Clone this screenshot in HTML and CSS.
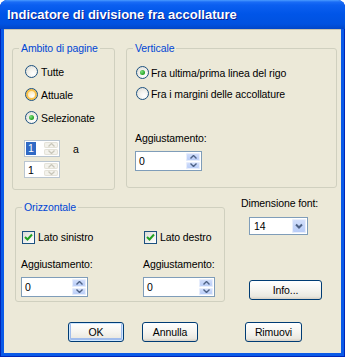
FILE: index.html
```html
<html>
    <head>
        <title>Indicatore di divisione fra accollature</title>
        <link rel="stylesheet" href="styles.css">
    </head>
    <body>
        <div class="window">
            <div class="titlebar">Indicatore di divisione fra accollature</div>
            <div class="client">
                <div class="top">
                    <fieldset class="group range">
                        <legend>Ambito di pagine</legend>
                        <div class="opts">
                            <div class="opt"><span class="rb"></span>Tutte</div>
                            <div class="opt"><span class="rb hot"></span>Attuale</div>
                            <div class="opt"><span class="rb on"></span>Selezionate</div>
                        </div>
                        <div class="pages">
                            <div class="pagerow">
                                <div class="spin off small"><span class="val"><span class="sel">1</span></span><span class="btns"><span class="b"><svg width="7" height="4"><path d="M0.5 3.5 L3.5 0.5 L6.5 3.5" fill="none" stroke="#c9c7ba" stroke-width="1.3"/></svg></span><span class="b"><svg width="7" height="4"><path d="M0.5 0.5 L3.5 3.5 L6.5 0.5" fill="none" stroke="#c9c7ba" stroke-width="1.3"/></svg></span></span></div>
                                <span class="to">a</span>
                            </div>
                            <div class="pagerow">
                                <div class="spin off small"><span class="val">1</span><span class="btns"><span class="b"><svg width="7" height="4"><path d="M0.5 3.5 L3.5 0.5 L6.5 3.5" fill="none" stroke="#c9c7ba" stroke-width="1.3"/></svg></span><span class="b"><svg width="7" height="4"><path d="M0.5 0.5 L3.5 3.5 L6.5 0.5" fill="none" stroke="#c9c7ba" stroke-width="1.3"/></svg></span></span></div>
                            </div>
                        </div>
                    </fieldset>
                    <fieldset class="group vert">
                        <legend>Verticale</legend>
                        <div class="opts">
                            <div class="opt"><span class="rb on"></span>Fra ultima/prima linea del rigo</div>
                            <div class="opt"><span class="rb"></span>Fra i margini delle accollature</div>
                        </div>
                        <div class="adj">Aggiustamento:</div>
                        <div class="spin"><span class="val">0</span><span class="btns"><span class="b"><svg width="7" height="4"><path d="M0.5 3.5 L3.5 0.5 L6.5 3.5" fill="none" stroke="#4d6185" stroke-width="1.4"/></svg></span><span class="b"><svg width="7" height="4"><path d="M0.5 0.5 L3.5 3.5 L6.5 0.5" fill="none" stroke="#4d6185" stroke-width="1.4"/></svg></span></span></div>
                    </fieldset>
                </div>
                <div class="middle">
                    <fieldset class="group horiz">
                        <legend>Orizzontale</legend>
                        <div class="sides">
                            <div class="opt chk"><span class="cb"><svg width="11" height="11"><path d="M2 5 L4.5 7.5 L9 2.5" fill="none" stroke="#21a121" stroke-width="2"/></svg></span>Lato sinistro</div>
                            <div class="opt chk"><span class="cb"><svg width="11" height="11"><path d="M2 5 L4.5 7.5 L9 2.5" fill="none" stroke="#21a121" stroke-width="2"/></svg></span>Lato destro</div>
                            <div class="adj">Aggiustamento:</div>
                            <div class="adj">Aggiustamento:</div>
                            <div class="spin"><span class="val">0</span><span class="btns"><span class="b"><svg width="7" height="4"><path d="M0.5 3.5 L3.5 0.5 L6.5 3.5" fill="none" stroke="#4d6185" stroke-width="1.4"/></svg></span><span class="b"><svg width="7" height="4"><path d="M0.5 0.5 L3.5 3.5 L6.5 0.5" fill="none" stroke="#4d6185" stroke-width="1.4"/></svg></span></span></div>
                            <div class="spin wide"><span class="val">0</span><span class="btns"><span class="b"><svg width="7" height="4"><path d="M0.5 3.5 L3.5 0.5 L6.5 3.5" fill="none" stroke="#4d6185" stroke-width="1.4"/></svg></span><span class="b"><svg width="7" height="4"><path d="M0.5 0.5 L3.5 3.5 L6.5 0.5" fill="none" stroke="#4d6185" stroke-width="1.4"/></svg></span></span></div>
                        </div>
                    </fieldset>
                    <div class="side">
                        <div class="fontlabel">Dimensione font:</div>
                        <div class="combo"><span class="val">14</span><span class="drop"><svg width="8" height="6"><path d="M1 1.5 L4 4.5 L7 1.5" fill="none" stroke="#4d6185" stroke-width="2"/></svg></span></div>
                        <div class="btn info">Info...</div>
                    </div>
                </div>
                <div class="buttons">
                    <div class="btn default">OK</div>
                    <div class="btn">Annulla</div>
                    <div class="btn remove">Rimuovi</div>
                </div>
            </div>
        </div>
    </body>
</html>
```

FILE: styles.css
```css
body {
    margin: 0;
    background: #fff;
    font-family: "Liberation Sans", Arial, sans-serif;
    font-size: 10.5px;
    letter-spacing: -0.1px;
    color: #000;
}
.window {
    width: 345px;
    height: 357px;
    box-sizing: border-box;
    display: flex;
    flex-direction: column;
    padding: 0 4px 4px;
    background: #0a5ae8;
    border-radius: 8px 8px 0 0;
    box-shadow: inset 1px 0 #0026b8, inset -1px 0 #0026b8, inset 0 -1px #0026b8;
}
.titlebar {
    height: 29px;
    margin: 0 -4px;
    padding-left: 7px;
    display: flex;
    align-items: center;
    color: #fff;
    font-size: 13px;
    font-weight: bold;
    letter-spacing: 0;
    text-shadow: 1px 1px #0a1e8c;
    border-radius: 7px 7px 0 0;
    background: linear-gradient(#4a9bff 0, #1a6cf6 2px, #0b5ff0 5px, #0055e8 14px, #0052e0 24px, #0146c8 29px);
}
.client {
    flex: 1;
    background: #ece9d8;
    padding: 13px 0 0 8px;
    box-shadow: inset 0 1px #c8c4b0;
}
.top {
    display: flex;
    gap: 11px;
    align-items: flex-start;
}
.group {
    margin: 0;
    padding: 0;
    border: 1px solid #d0d0bf;
    border-radius: 3px;
    box-sizing: border-box;
    min-width: 0;
}
.group legend {
    margin-left: 6px;
    padding: 0 2px;
    color: #0046d5;
    line-height: 13px;
}
.range {
    width: 103px;
    height: 148px;
}
.vert {
    width: 211px;
    height: 146px;
}
.opts {
    padding: 5px 0 0 12px;
}
.opt {
    display: flex;
    align-items: center;
    gap: 3px;
    height: 23px;
}
.vert .opts {
    padding: 7px 0 0 9px;
}
.vert .opt {
    height: 21px;
    gap: 2px;
}
.rb {
    width: 13px;
    height: 13px;
    box-sizing: border-box;
    border-radius: 50%;
    border: 1px solid #1c5180;
    background: radial-gradient(circle at 65% 70%, #fff 0, #f4f3ee 40%, #d8d8d2 100%);
    display: flex;
    align-items: center;
    justify-content: center;
}
.rb.hot {
    box-shadow: inset 0 0 0 2px #f8c048;
    background: radial-gradient(circle at 60% 65%, #fff 0, #fde9b8 50%, #f6b845 100%);
}
.rb.on::after {
    content: "";
    width: 5px;
    height: 5px;
    border-radius: 50%;
    background: radial-gradient(circle at 35% 35%, #7fe07f, #21a121 70%);
}
.pages {
    padding: 11px 0 0 11px;
    display: flex;
    flex-direction: column;
    gap: 4px;
}
.pagerow {
    display: flex;
    align-items: center;
    gap: 13px;
}
.to {
    padding-top: 1px;
}
.spin {
    width: 67px;
    height: 20px;
    box-sizing: border-box;
    border: 1px solid #7f9db9;
    background: #fff;
    display: flex;
}
.spin.wide {
    width: 72px;
}
.spin.small {
    width: 36px;
    height: 17px;
}
.spin .val {
    flex: 1;
    padding-left: 3px;
    display: flex;
    align-items: center;
}
.spin .sel {
    background: #316ac5;
    color: #fff;
    padding: 0 2px;
    margin-left: -2px;
    line-height: 13px;
}
.spin .btns {
    width: 14px;
    padding: 1px 1px 1px 0;
    display: flex;
    flex-direction: column;
    gap: 1px;
}
.spin .b {
    flex: 1;
    border-radius: 2px;
    background: linear-gradient(#d4e0fb, #b6cbf7);
    box-shadow: inset 0 0 0 1px #e8eefc;
    display: flex;
    align-items: center;
    justify-content: center;
}
.spin.off {
    border-color: #b9c5d0;
}
.spin.off .b {
    background: #f3f2ec;
    box-shadow: inset 0 0 0 1px #e4e2d8;
}
.adj {
    line-height: 13px;
}
.vert .adj {
    padding: 28px 0 0 8px;
}
.vert .spin {
    margin: 6px 0 0 8px;
}
.middle {
    display: flex;
    margin-top: 7px;
}
.horiz {
    width: 210px;
    height: 101px;
    margin: 4px 0 0 3px;
}
.sides {
    display: grid;
    grid-template-columns: 122px 72px;
    padding: 14px 0 0 5px;
}
.chk {
    height: 18px;
    gap: 3px;
}
.cb {
    width: 13px;
    height: 13px;
    box-sizing: border-box;
    border: 1px solid #1c5180;
    background: linear-gradient(135deg, #dcdcd7, #fff);
    margin-left: 1px;
    display: flex;
    align-items: center;
    justify-content: center;
}
.sides .adj {
    margin-top: 12px;
}
.sides .spin {
    margin-top: 6px;
}
.side {
    margin-left: 16px;
    display: flex;
    flex-direction: column;
    align-items: flex-start;
}
.fontlabel {
    line-height: 13px;
}
.combo {
    width: 59px;
    height: 18px;
    box-sizing: border-box;
    margin: 7px 0 0 8px;
    border: 1px solid #7f9db9;
    background: #fff;
    display: flex;
}
.combo .val {
    flex: 1;
    padding-left: 4px;
    display: flex;
    align-items: center;
}
.combo .drop {
    width: 14px;
    margin: 1px;
    border-radius: 2px;
    background: linear-gradient(#d4e0fb, #b6cbf7);
    box-shadow: inset 0 0 0 1px #e8eefc;
    display: flex;
    align-items: center;
    justify-content: center;
}
.btn {
    width: 56px;
    height: 20px;
    box-sizing: border-box;
    border: 1px solid #003c74;
    border-radius: 3px;
    background: linear-gradient(#fff, #f5f4ef 50%, #ebe9e1 85%, #d6d0c5);
    display: flex;
    align-items: center;
    justify-content: center;
}
.btn.default {
    box-shadow: inset 0 0 0 1px #cee7ff, inset 0 -1px 0 2px #a0bcec;
}
.info {
    width: 73px;
    height: 20px;
    margin: 45px 0 0 8px;
}
.buttons {
    display: flex;
    margin: 20px 0 0 56px;
    gap: 18px;
}
.buttons .remove {
    width: 57px;
    margin-left: 29px;
}
```
